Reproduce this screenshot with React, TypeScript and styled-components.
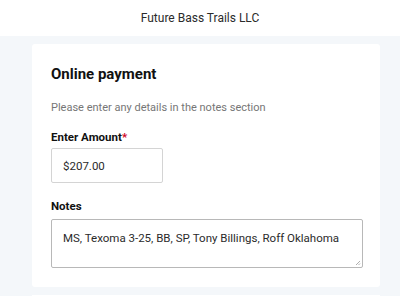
import React from "react";
import styled, { createGlobalStyle } from "styled-components";

const GlobalStyle = createGlobalStyle`
  html, body {
    margin: 0;
    padding: 0;
    background: #f4f7fa;
    font-family: Roboto, "Liberation Sans", sans-serif;
    color: #111;
  }
`;

const Page = styled.div`
  width: 400px;
  height: 296px;
  overflow: hidden;
  display: flex;
  flex-direction: column;
`;

const Header = styled.header`
  height: 36px;
  flex: none;
  background: #fff;
  display: flex;
  align-items: center;
  justify-content: center;
  font-size: 12px;
  color: #2b2b2b;
`;

const Body = styled.main`
  padding: 8px 20px 0 32px;
  display: flex;
  flex-direction: column;
  gap: 8px;
`;

const Card = styled.section`
  background: #fff;
  border-radius: 3px;
  padding: 20px 18px 19px 19px;
  display: flex;
  flex-direction: column;
`;

const Title = styled.h1`
  margin: 0;
  font-size: 15px;
  font-weight: 700;
  line-height: 20px;
  color: #111;
`;

const Hint = styled.p`
  margin: 17px 0 0;
  font-size: 11px;
  line-height: 14px;
  color: #767676;
`;

const Label = styled.label<{ gap?: number }>`
  display: block;
  margin-top: ${(p) => p.gap ?? 15}px;
  font-size: 11.5px;
  font-weight: 700;
  line-height: 14px;
  color: #111;
`;

const Required = styled.span`
  color: #d0021b;
`;

const Field = styled.div<{ width: number; height: number }>`
  box-sizing: border-box;
  margin-top: 4px;
  width: ${(p) => p.width}px;
  height: ${(p) => p.height}px;
  border: 1px solid #d4d4d4;
  border-radius: 2px;
  padding: 0 11px;
  font-size: 11.5px;
  color: #2b2b2b;
  display: flex;
  white-space: nowrap;
`;

const AmountField = styled(Field)`
  align-items: center;
`;

const NotesField = styled(Field)`
  position: relative;
  margin-top: 6px;
  border-color: #b8b8b8;
  padding-top: 11px;
  line-height: 14px;
`;

const Grip = styled.svg`
  position: absolute;
  right: 1px;
  bottom: 1px;
`;

const NextCard = styled.div`
  height: 10px;
  background: #fff;
`;

export default function App() {
  return (
    <Page>
      <GlobalStyle />
      <Header>Future Bass Trails LLC</Header>
      <Body>
        <Card>
          <Title>Online payment</Title>
          <Hint>Please enter any details in the notes section</Hint>
          <Label>
            Enter Amount<Required>*</Required>
          </Label>
          <AmountField width={112} height={35}>
            $207.00
          </AmountField>
          <Label gap={16}>Notes</Label>
          <NotesField width={312} height={49}>
            MS, Texoma 3-25, BB, SP, Tony Billings, Roff Oklahoma
            <Grip width="6" height="6" viewBox="0 0 6 6">
              <path d="M5 1 L1 5 M5 3.5 L3.5 5" stroke="#999" strokeWidth="0.8" />
            </Grip>
          </NotesField>
        </Card>
        <NextCard />
      </Body>
    </Page>
  );
}
